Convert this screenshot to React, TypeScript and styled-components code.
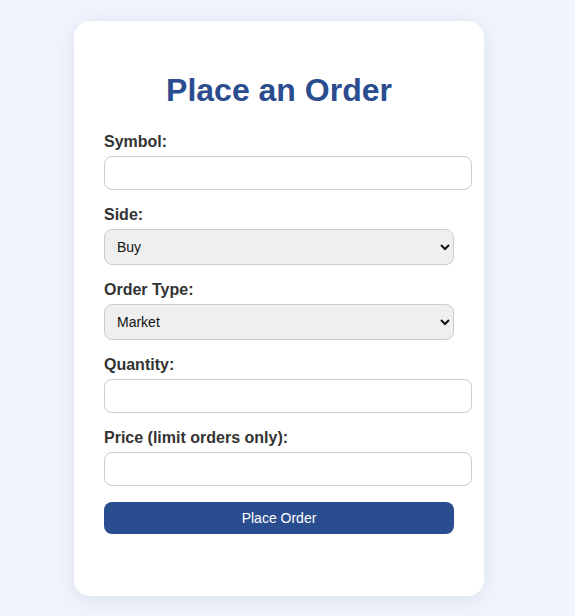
import React from "react";
import styled, { createGlobalStyle } from "styled-components";

const GlobalStyle = createGlobalStyle`
    html, body {
        margin: 0;
        padding: 0;
        background: #f0f4fd;
        font-family: "Liberation Sans", Arial, sans-serif;
    }
`;

const Page = styled.div`
    display: flex;
    justify-content: center;
    padding: 21px 17px 21px 0;
    min-height: 616px;
    box-sizing: border-box;
`;

const Card = styled.div`
    width: 410px;
    box-sizing: border-box;
    padding: 30px 30px 62px;
    background: #fff;
    border-radius: 16px;
    box-shadow: 0 4px 20px rgba(40, 60, 110, 0.1);
`;

const Title = styled.h1`
    margin: 21px 0 24px;
    text-align: center;
    font-size: 32px;
    line-height: 37px;
    font-weight: bold;
    color: #2a4d8f;
`;

const Form = styled.form`
    display: flex;
    flex-direction: column;
`;

const Label = styled.label`
    display: block;
    font-size: 16px;
    line-height: 18px;
    font-weight: bold;
    color: #333;
    margin-bottom: 5px;
`;

const Input = styled.input`
    display: block;
    width: 100%;
    height: 16px;
    padding: 8px;
    margin-bottom: 16px;
    font-size: 13px;
    font-family: "Liberation Sans", Arial, sans-serif;
    border: 1px solid #ccc;
    border-radius: 8px;
    background: #fff;
`;

const Select = styled.select`
    display: block;
    width: 100%;
    height: 36px;
    padding: 0 8px;
    margin-bottom: 16px;
    font-size: 14px;
    font-family: "Liberation Sans", Arial, sans-serif;
    color: #111;
    border: 1px solid #ccc;
    border-radius: 8px;
    background-color: #efefef;
`;

const Button = styled.button`
    width: 100%;
    height: 32px;
    border: none;
    border-radius: 8px;
    background: #2a4d8f;
    color: #fff;
    font-size: 14px;
    font-family: "Liberation Sans", Arial, sans-serif;
    cursor: pointer;
`;

const App = () => {
    return (
        <>
            <GlobalStyle />
            <Page>
                <Card>
                    <Title>Place an Order</Title>
                    <Form onSubmit={(e) => e.preventDefault()}>
                        <Label htmlFor="symbol">Symbol:</Label>
                        <Input id="symbol" type="text" />

                        <Label htmlFor="side">Side:</Label>
                        <Select id="side" defaultValue="buy">
                            <option value="buy">Buy</option>
                            <option value="sell">Sell</option>
                        </Select>

                        <Label htmlFor="type">Order Type:</Label>
                        <Select id="type" defaultValue="market">
                            <option value="market">Market</option>
                            <option value="limit">Limit</option>
                        </Select>

                        <Label htmlFor="quantity">Quantity:</Label>
                        <Input id="quantity" type="number" />

                        <Label htmlFor="price">Price (limit orders only):</Label>
                        <Input id="price" type="number" />

                        <Button type="submit">Place Order</Button>
                    </Form>
                </Card>
            </Page>
        </>
    );
};

export default App;
